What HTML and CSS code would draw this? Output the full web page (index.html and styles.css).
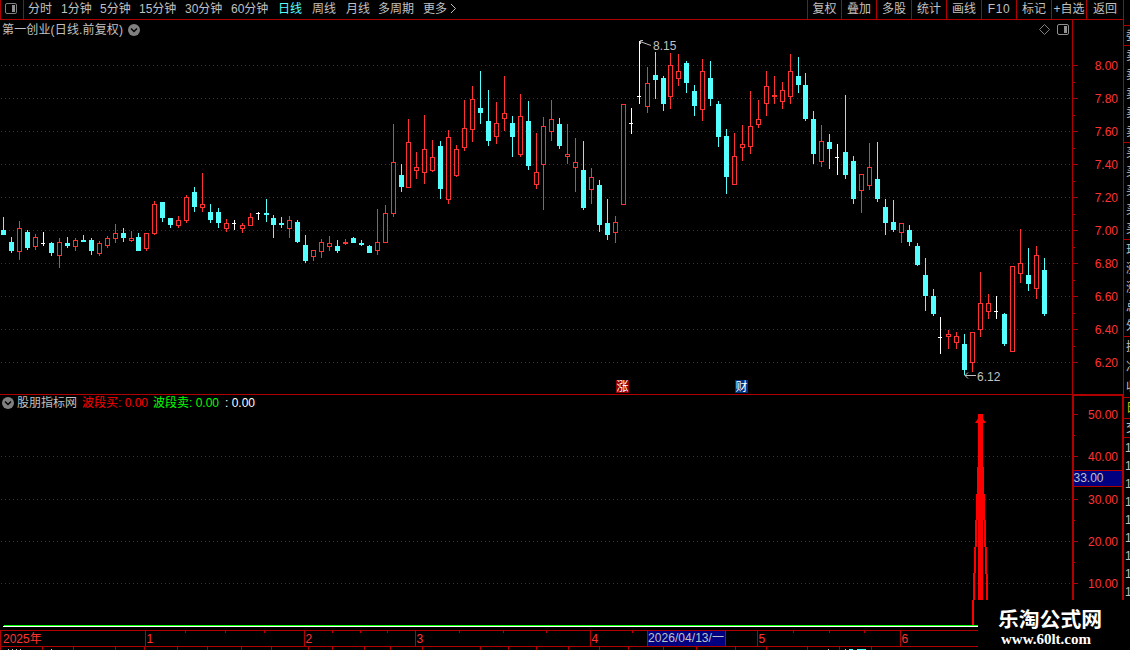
FILE: index.html
```html
<!DOCTYPE html>
<html lang="zh-CN">
<head>
    <meta charset="UTF-8">
    <meta name="viewport" content="width=device-width, initial-scale=1.0">
    <title>第一创业 日线</title>
    <link rel="stylesheet" href="styles.css">
</head>
<body>
    <div class="app">
        <div class="main">
            <div class="toolbar">
                <div class="layout-btn">
                    <svg width="13" height="12" viewBox="0 0 13 12">
                        <rect x="0.5" y="0.5" width="11" height="10" rx="1.5" fill="none" stroke="#808080"/>
                        <rect x="7" y="2" width="3" height="7" fill="#909090"/>
                    </svg>
                </div>
                <div class="periods">
                    <span>分时</span>
                    <span>1分钟</span>
                    <span>5分钟</span>
                    <span>15分钟</span>
                    <span>30分钟</span>
                    <span>60分钟</span>
                    <span class="active">日线</span>
                    <span>周线</span>
                    <span>月线</span>
                    <span>多周期</span>
                    <span>更多</span>
                    <svg width="7" height="11" viewBox="0 0 7 11"><path d="M1 1l4.5 4.5L1 10" fill="none" stroke="#c0c0c0"/></svg>
                </div>
                <div class="tools">
                    <span>复权</span>
                    <span>叠加</span>
                    <span>多股</span>
                    <span>统计</span>
                    <span>画线</span>
                    <span class="latin">F10</span>
                    <span>标记</span>
                    <span>+自选</span>
                    <span>返回</span>
                </div>
            </div>

            <div class="panel">
                <div class="legend">
                    <span class="stock">第一创业(日线.前复权)</span>
                    <svg class="fold" width="12" height="12" viewBox="0 0 12 12">
                        <circle cx="6" cy="6" r="6" fill="#808080"/>
                        <path d="M3 4.5l3 3 3-3" fill="none" stroke="#000" stroke-width="1.5"/>
                    </svg>
                </div>
                <svg id="priceChart" class="chart" width="1124" height="374" viewBox="0 20 1124 374"></svg>
            </div>

            <div class="panel sub">
                <div class="legend">
                    <svg class="fold" width="12" height="12" viewBox="0 0 12 12">
                        <circle cx="6" cy="6" r="6" fill="#808080"/>
                        <path d="M3 4.5l3 3 3-3" fill="none" stroke="#000" stroke-width="1.5"/>
                    </svg>
                    <span class="name">股朋指标网</span>
                    <span class="buy">波段买: 0.00</span>
                    <span class="sell">波段卖: 0.00</span>
                    <span class="plain">: 0.00</span>
                </div>
                <svg id="signalChart" class="chart" width="1124" height="236" viewBox="0 394 1124 236"></svg>
            </div>

            <svg id="timeline" class="chart" width="1124" height="20" viewBox="0 630 1124 20"></svg>
        </div>

        <div class="quotes">
            <div class="block blank"></div>
            <div class="block head"><b>委</b></div>
            <div class="block five"><b>卖</b><b>卖</b><b>卖</b><b>卖</b><b>卖</b></div>
            <div class="block five"><b>买</b><b>买</b><b>买</b><b>买</b><b>买</b></div>
            <div class="block five"><b>现</b><b>涨</b><b>涨</b><b>总</b><b>外</b></div>
            <div class="block three"><b>换</b><b>净</b><b>收</b></div>
            <div class="block tab"><b>日</b></div>
            <div class="block deal"><b>交</b></div>
            <div class="block ticks"><i>1</i><i>1</i><i>1</i><i>1</i><i>1</i><i>1</i><i>1</i><i>1</i><i>1</i></div>
        </div>

        <div class="watermark">
            <div class="site">乐淘公式网</div>
            <div class="url">www.60lt.com</div>
        </div>
    </div>

    <script src="chart.js"></script>
</body>
</html>
```
FILE: styles.css
```css
body {
    margin: 0;
    background: #000;
    color: #c0c0c0;
    font-family: "Liberation Sans", "Noto Sans CJK SC", sans-serif;
    font-size: 12px;
    line-height: 18px;
}
.app {
    position: relative;
    display: flex;
    width: 1130px;
    height: 650px;
    overflow: hidden;
}
.main {
    display: flex;
    flex-direction: column;
    width: 1124px;
    flex: none;
}
.toolbar {
    display: flex;
    height: 20px;
    box-sizing: border-box;
    border-bottom: 1px solid #b00000;
    line-height: 19px;
    white-space: nowrap;
}
.layout-btn {
    box-sizing: border-box;
    width: 24px;
    padding: 3px 0 0 4px;
    border-left: 1px solid #b00000;
    border-right: 1px solid #b00000;
}
.layout-btn svg {
    display: block;
}
.periods {
    display: grid;
    grid-template-columns: 33px 39px 39px 46px 46px 47px 34px 34px 32px 45px 27px 10px;
    padding-left: 4px;
    width: 779px;
}
.periods svg {
    margin-top: 3px;
}
.active {
    color: #54ffff;
}
.tools {
    display: grid;
    grid-template-columns: 34px repeat(7, 35px) 37px;
    border-right: 1px solid #b00000;
}
.tools span {
    border-left: 1px solid #b00000;
    text-align: center;
}
.latin {
    letter-spacing: 0.6px;
}
.panel {
    position: relative;
    height: 374px;
}
.panel.sub {
    height: 236px;
}
.chart {
    display: block;
}
.legend {
    position: absolute;
    left: 2px;
    top: 0;
    display: flex;
    align-items: center;
    gap: 5px;
    height: 19px;
    white-space: nowrap;
}
.stock {
    letter-spacing: 0.15px;
}
.sub .legend {
    gap: 0;
    height: 18px;
}
.name {
    margin: 0 5px 0 3px;
}
.buy {
    width: 71px;
    color: #f00;
}
.sell {
    width: 72px;
    color: #0f0;
}
.plain {
    color: #fff;
}
.axis-text {
    fill: #ff3232;
}
.note {
    fill: #c0c0c0;
}
.quotes {
    width: 6px;
    overflow: hidden;
}
.block {
    display: flex;
    flex-direction: column;
    justify-content: space-around;
    box-sizing: border-box;
    border-bottom: 1px solid #b00000;
    padding-left: 2px;
}
.block b {
    font-weight: normal;
    line-height: 14px;
    width: 14px;
}
.blank {
    height: 26px;
}
.head {
    height: 20px;
}
.five {
    height: 97px;
}
.three {
    height: 61px;
}
.tab {
    height: 21px;
    color: #c8c800;
}
.deal {
    height: 19px;
}
.ticks {
    display: block;
    border: 0;
    padding: 1px 0 0 1px;
}
.ticks i {
    display: block;
    font-style: normal;
    height: 18px;
}
.watermark {
    position: absolute;
    left: 978px;
    top: 600px;
    width: 152px;
    height: 50px;
    background: #000;
    color: #fff;
    font-weight: bold;
    white-space: nowrap;
}
.site {
    padding: 5px 0 0 20px;
    font-family: "Noto Sans CJK SC", sans-serif;
    font-size: 20.8px;
    line-height: 26px;
}
.url {
    padding-left: 23px;
    font-family: "Liberation Serif", serif;
    font-size: 15px;
    line-height: 17px;
}
```
FILE: chart.js
```js
const NS = 'http://www.w3.org/2000/svg';
const LINE = '#b00000';
const DOTS = '#901010';
const UP = '#ff3232';
const DOWN = '#54ffff';

// type, x, high, body top, body bottom, low
const candles = `
c 3 217 230 235 235|c 11 237 242 251 253|r 19 221 228 252 260|c 27 230 232 248 250
r 35 234 237 247 250|w 43 232 243 244 246|c 51 242 243 253 256|r 59 238 242 256 268
c 67 237 243 246 248|r 75 238 240 247 251|c 83 235 240 242 242|c 91 238 240 251 255
r 99 241 243 254 256|r 107 236 238 246 248|r 115 224 233 239 243|c 123 228 233 238 242
r 131 231 238 241 242|c 138 233 237 251 251|r 146 233 233 249 251|r 154 201 204 234 235
c 162 202 202 218 222|c 170 218 218 225 228|r 178 216 220 226 228|r 186 195 197 221 223
c 194 187 192 207 212|r 202 173 204 208 212|c 210 204 212 220 223|c 218 208 212 223 228
r 226 219 223 229 232|w 234 220 223 224 230|r 242 223 225 229 233|r 250 213 217 226 226
w 258 212 213 214 220|c 266 199 213 215 222|c 273 215 218 225 238|c 281 217 223 225 228
r 289 216 220 229 238|c 297 220 222 242 243|c 305 235 245 261 263|r 313 250 250 257 261
r 321 239 242 252 258|r 329 236 243 247 251|c 337 240 246 251 253|r 345 239 242 244 245
c 353 237 238 243 243|c 361 240 243 245 246|c 369 245 246 253 253|r 377 209 242 251 255
r 385 205 213 243 243|r 393 124 162 214 217|c 401 164 175 187 192|r 408 119 142 188 188
r 416 152 167 171 179|r 424 115 149 173 184|r 432 140 157 171 172|c 440 141 146 189 199
r 448 130 137 200 204|r 456 145 149 176 177|r 464 100 128 148 151|r 472 86 99 130 142
c 480 71 108 113 124|c 488 90 121 141 146|r 496 102 123 137 144|r 504 76 113 119 131
c 512 116 123 137 157|r 520 94 116 155 157|c 528 101 121 166 170|r 536 133 172 185 189
r 543 117 126 165 210|r 551 100 119 132 141|c 559 118 124 146 149|r 567 124 154 157 164
r 575 138 162 168 192|c 583 141 170 208 210|r 591 168 177 190 204|c 599 180 185 225 232
c 607 199 223 235 240|r 615 216 222 233 243|r 623 104 104 205 205|w 631 108 123 124 134
w 639 41 96 97 104|r 647 67 83 107 113|c 655 52 75 80 99|c 663 76 78 104 111
r 670 53 65 97 109|r 678 54 71 79 86|c 686 61 63 83 93|c 694 85 91 106 116
r 702 59 71 110 121|c 710 61 78 99 106|c 718 101 104 137 147|c 726 129 136 177 194
r 734 133 156 185 185|r 742 125 144 148 161|r 750 91 126 147 154|r 758 100 119 125 128
r 766 71 86 104 116|r 774 76 95 97 104|r 782 82 90 102 109|r 790 54 71 97 104
c 798 57 76 85 93|c 805 73 85 119 121|c 813 111 119 154 164|r 821 125 141 162 167
c 829 134 142 149 169|w 837 144 157 158 175|c 845 95 152 175 179|c 853 156 161 199 204
r 861 174 174 191 213|r 869 143 167 186 190|c 877 142 179 199 202|c 885 199 207 223 235
c 893 200 222 230 232|r 901 223 223 233 243|c 909 225 230 242 246|c 917 243 246 265 266
c 925 258 275 296 311|c 933 289 296 314 316|w 940 317 337 338 354|r 948 330 334 337 349
r 956 332 336 343 349|c 964 334 344 370 375|r 972 332 332 363 372|r 980 272 303 330 337
r 988 294 303 312 319|w 996 296 311 312 319|c 1004 313 314 344 346|r 1012 266 266 352 352
r 1020 229 263 274 283|c 1028 248 275 284 291|r 1036 246 255 289 299|c 1044 258 270 314 316
`.trim().split(/[|\n]/).map(row => row.split(' '));

function add(svg, tag, attrs, text) {
    const el = document.createElementNS(NS, tag);
    for (const key in attrs) el.setAttribute(key, attrs[key]);
    if (text) el.textContent = text;
    svg.appendChild(el);
}

function rect(svg, x, y, width, height, fill) {
    if (width > 0 && height > 0) add(svg, 'rect', { x, y, width, height, fill });
}

function text(svg, x, y, value, cls, anchor) {
    add(svg, 'text', { x, y, class: cls, 'text-anchor': anchor || 'start' }, value);
}

function gridLine(svg, y) {
    add(svg, 'path', { d: `M1 ${y + 0.5}H1072`, stroke: DOTS, 'stroke-dasharray': '1 3' });
}

function drawCandle(svg, [type, ...nums]) {
    const [x, high, top, bottom, low] = nums.map(Number);
    if (type === 'w') {
        rect(svg, x, high, 1, low - high, '#fff');
        rect(svg, x - 2, top, 4, 1, '#fff');
        return;
    }
    const color = type === 'r' ? UP : DOWN;
    rect(svg, x, high, 1, top - high, color);
    rect(svg, x, bottom, 1, low - bottom, color);
    rect(svg, x - 2, top, 5, bottom - top, color);
    if (type === 'r') rect(svg, x - 1, top + 1, 3, bottom - top - 2, '#000');
}

function drawPrice() {
    const svg = document.getElementById('priceChart');
    for (let i = 0; i < 10; i++) {
        const y = 65 + i * 33;
        gridLine(svg, y);
        rect(svg, 1073, y, 5, 1, LINE);
        if (i < 9) rect(svg, 1073, y + 17, 2, 1, LINE);
        text(svg, 1118, y + 5, (8 - i * 0.2).toFixed(2), 'axis-text', 'end');
    }
    rect(svg, 1072, 20, 1, 374, LINE);
    rect(svg, 1123, 20, 1, 374, LINE);
    candles.forEach(c => drawCandle(svg, c));

    // high / low marks
    add(svg, 'path', { d: 'M643 40.5H640.5V44M640 41.5L651 45.5', fill: 'none', stroke: '#c0c0c0' });
    text(svg, 653, 50, '8.15', 'note');
    add(svg, 'path', { d: 'M976 375.5H965M968 372.5L965 375.5L968 378.5', fill: 'none', stroke: '#c0c0c0' });
    text(svg, 977, 381, '6.12', 'note');

    // event badges
    rect(svg, 616, 380, 13, 13, '#900000');
    add(svg, 'text', { x: 616.5, y: 391, fill: '#fff' }, '涨');
    rect(svg, 735, 380, 13, 13, '#003080');
    add(svg, 'text', { x: 735.5, y: 391, fill: '#fff' }, '财');

    add(svg, 'path', { d: 'M1044.5 24.5l5 5-5 5-5-5z', fill: 'none', stroke: '#808080' });
    add(svg, 'rect', { x: 1057.5, y: 24.5, width: 11, height: 10, rx: 1.5, fill: 'none', stroke: '#909090' });
    rect(svg, 1064, 26, 3, 7, '#909090');
}

function drawSignal() {
    const svg = document.getElementById('signalChart');
    rect(svg, 0, 394, 1124, 1, LINE);
    rect(svg, 1072, 394, 52, 2, LINE);
    rect(svg, 1072, 394, 2, 236, LINE);
    rect(svg, 1122, 394, 2, 236, LINE);
    [414, 456, 499, 541, 583].forEach((y, i) => {
        if (i > 0) gridLine(svg, y);
        rect(svg, 1074, y, 4, 1, LINE);
        rect(svg, 1074, y + 21, 1, 1, LINE);
        text(svg, 1118, y + 5, (50 - i * 10).toFixed(2), 'axis-text', 'end');
    });

    rect(svg, 1074, 470, 48, 17, LINE);
    rect(svg, 1074, 471, 48, 15, '#000080');
    text(svg, 1073.5, 482, '33.00', 'note');

    // spike: solid core, then the stepped outline on both sides
    const red = '#f00';
    rect(svg, 978, 414, 5, 186, red);
    add(svg, 'path', { d: 'M980.5 415L986 423H975z', fill: red });
    rect(svg, 977, 467, 7, 27, red);
    rect(svg, 976, 494, 9, 26, red);
    rect(svg, 975, 520, 2, 27, red);
    rect(svg, 974, 547, 2, 26, red);
    rect(svg, 973, 573, 2, 27, red);
    rect(svg, 972, 600, 2, 25, red);
    rect(svg, 984, 520, 2, 27, red);
    rect(svg, 985, 547, 2, 27, red);
    rect(svg, 986, 574, 2, 26, red);

    rect(svg, 4, 625, 974, 1, '#0f0');
    rect(svg, 3, 626, 975, 1, '#fff');
}

function drawTimeline() {
    const svg = document.getElementById('timeline');
    rect(svg, 0, 630, 1124, 1, LINE);
    rect(svg, 0, 646, 1124, 1, LINE);
    rect(svg, 0, 630, 1, 17, LINE);
    text(svg, 3, 643, '2025年', 'axis-text');
    [145, 304, 415, 590, 757, 900].forEach((x, i) => {
        rect(svg, x, 630, 1, 17, LINE);
        text(svg, x + 1.5, 643, String(i + 1), 'axis-text');
    });
    [185, 225, 264, 332, 360, 387, 459, 503, 546, 632, 793, 829, 864]
        .forEach(x => rect(svg, x, 631, 1, 2, LINE));

    rect(svg, 647, 631, 79, 15, LINE);
    rect(svg, 648, 631, 77, 15, '#000080');
    add(svg, 'text', { x: 648, y: 642, class: 'note', textLength: 76 }, '2026/04/13/一');

    [0, 42, 73, 115, 144, 177, 207, 241, 271, 308, 332, 364, 390, 422, 480, 508, 536, 568,
        599, 628, 663, 696, 735, 766, 807, 839, 871].forEach(x => rect(svg, x, 647, 1, 3, LINE));
    [8, 12, 16, 20, 51, 828].forEach(x => rect(svg, x, 649, 1, 1, '#c0c0c0'));
    [[845, 1], [849, 4], [857, 9]].forEach(([x, w]) => rect(svg, x, 649, w, 1, DOWN));
}

drawPrice();
drawSignal();
drawTimeline();
```
